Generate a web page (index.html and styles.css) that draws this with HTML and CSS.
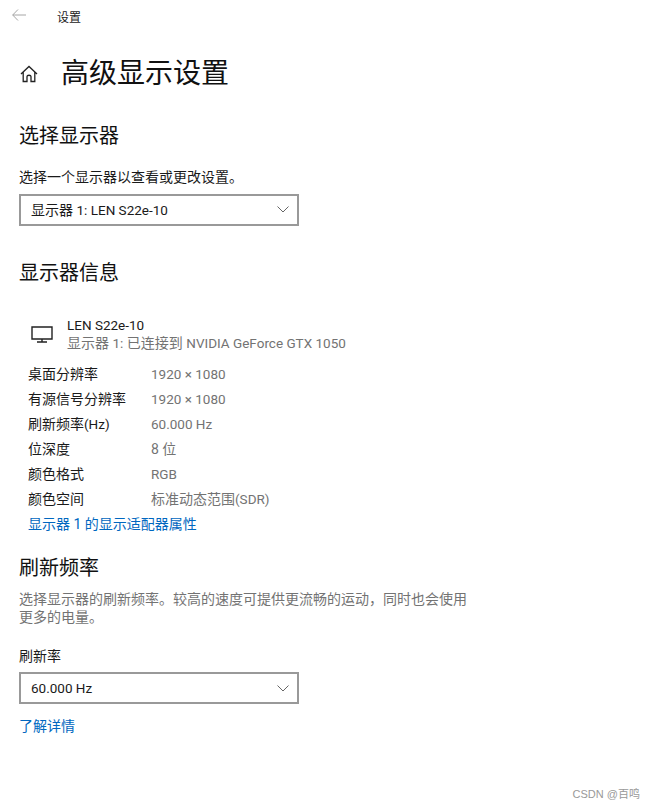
FILE: index.html
```html
<!DOCTYPE html>
<html lang="zh-CN">
<head>
    <meta charset="UTF-8">
    <title>设置</title>
    <link rel="stylesheet" href="styles.css">
</head>
<body>

<div class="title-bar">
    <svg class="back-icon" width="14" height="12" viewBox="0 0 14 12"><path d="M6 .5L.7 6 6 11.5M.7 6H14" fill="none" stroke="#a6a6a6" stroke-width="1"/></svg>
    <span class="title-text">设置</span>
</div>

<div class="page">
    <div class="page-head">
        <svg class="home-icon" width="18" height="18" viewBox="0 0 18 18"><path d="M1 9L9 1.5 17 9M3.2 7.2V16.5H7V11.5C7 9.8 11 9.8 11 11.5V16.5H14.8V7.2" fill="none" stroke="#222" stroke-width="1.3"/></svg>
        <h1>高级显示设置</h1>
    </div>

    <h2 class="first-head">选择显示器</h2>
    <div class="field-label">选择一个显示器以查看或更改设置。</div>
    <div class="dropdown">
        <span>显示器 <span class="latin">1: LEN S22e-10</span></span>
        <svg class="chevron" width="12" height="7" viewBox="0 0 12 7"><path d="M.5.5L6 6 11.5.5" fill="none" stroke="#666" stroke-width="1"/></svg>
    </div>

    <h2 class="info-head">显示器信息</h2>
    <div class="monitor">
        <svg class="monitor-icon" width="22" height="17" viewBox="0 0 22 17"><path d="M1 1H21V13H1ZM11 13V16M6 16H16" fill="none" stroke="#222" stroke-width="1.4"/></svg>
        <div>
            <div class="monitor-name latin">LEN S22e-10</div>
            <div class="muted">显示器 <span class="latin">1:</span> 已连接到 <span class="latin">NVIDIA GeForce GTX 1050</span></div>
        </div>
    </div>

    <div class="info-list">
        <div class="info-row"><span>桌面分辨率</span><span class="muted latin">1920 × 1080</span></div>
        <div class="info-row"><span>有源信号分辨率</span><span class="muted latin">1920 × 1080</span></div>
        <div class="info-row"><span>刷新频率<span class="latin">(Hz)</span></span><span class="muted latin">60.000 Hz</span></div>
        <div class="info-row"><span>位深度</span><span class="muted">8 位</span></div>
        <div class="info-row"><span>颜色格式</span><span class="muted latin">RGB</span></div>
        <div class="info-row"><span>颜色空间</span><span class="muted">标准动态范围<span class="latin">(SDR)</span></span></div>
        <div class="info-row"><a href="#">显示器 1 的显示适配器属性</a></div>
    </div>

    <h2 class="rate-head">刷新频率</h2>
    <p class="desc">选择显示器的刷新频率。较高的速度可提供更流畅的运动，同时也会使用更多的电量。</p>
    <div class="field-label rate-label">刷新率</div>
    <div class="dropdown rate-dropdown">
        <span class="latin">60.000 Hz</span>
        <svg class="chevron" width="12" height="7" viewBox="0 0 12 7"><path d="M.5.5L6 6 11.5.5" fill="none" stroke="#666" stroke-width="1"/></svg>
    </div>
    <a class="more-link" href="#">了解详情</a>
</div>

<div class="watermark">CSDN @百鸣</div>

</body>
</html>
```

FILE: styles.css
```css
html, body {
    height: 100%;
}
body {
    font-family: Roboto, "Noto Sans CJK SC", sans-serif;
    font-size: 14px;
    background-color: #fff;
    color: #1a1a1a;
    margin: 0;
    display: flex;
    flex-direction: column;
    overflow: hidden;
}
.latin {
    font-size: 13.5px;
}
.title-bar {
    display: flex;
    align-items: center;
    height: 32px;
    padding-left: 12px;
}
.back-icon {
    margin-top: -2px;
}
.title-text {
    font-size: 12px;
    margin-left: 31px;
    color: #222;
}
.page {
    flex: 1;
    padding-left: 19px;
}
.page-head {
    display: flex;
    align-items: center;
    height: 40px;
    margin-top: 22px;
}
.home-icon {
    margin-left: 1px;
}
h1 {
    font-size: 28px;
    font-weight: 400;
    line-height: 40px;
    margin: 0 0 0 23px;
    color: #111;
}
h2 {
    font-size: 20px;
    font-weight: 400;
    line-height: 28px;
    margin: 0;
    color: #111;
}
.first-head {
    margin-top: 28px;
}
.field-label {
    line-height: 20px;
    margin-top: 17px;
}
.dropdown {
    display: flex;
    align-items: center;
    justify-content: space-between;
    box-sizing: border-box;
    width: 280px;
    height: 32px;
    margin-top: 7px;
    padding: 0 8px 2px 10px;
    border: 2px solid #999;
}
.rate-dropdown {
    margin-top: 6px;
    padding-bottom: 0;
}
.info-head {
    margin-top: 33px;
}
.monitor {
    display: flex;
    align-items: center;
    margin-top: 29px;
    padding-left: 12px;
}
.monitor-icon {
    margin-right: 14px;
    margin-top: 1px;
}
.monitor-name {
    line-height: 18px;
}
.muted {
    color: #737373;
    line-height: 18px;
}
.info-list {
    margin-top: 10px;
    padding-left: 9px;
}
.info-row {
    display: grid;
    grid-template-columns: 123px auto;
    height: 25px;
    line-height: 25px;
}
.info-row .muted {
    line-height: 25px;
}
.info-row a {
    grid-column: 1 / 3;
}
a {
    color: #0067c0;
    text-decoration: none;
}
.rate-head {
    margin-top: 17px;
}
.desc {
    width: 455px;
    line-height: 18px;
    margin: 8px 0 0;
    color: #737373;
}
.rate-label {
    margin-top: 20px;
}
.more-link {
    display: block;
    line-height: 20px;
    margin-top: 12px;
}
.watermark {
    align-self: flex-end;
    font-family: "Liberation Sans", "Noto Sans CJK SC", sans-serif;
    font-size: 11px;
    line-height: 16px;
    color: #999;
    margin: 0 15px 7px 0;
}
```
